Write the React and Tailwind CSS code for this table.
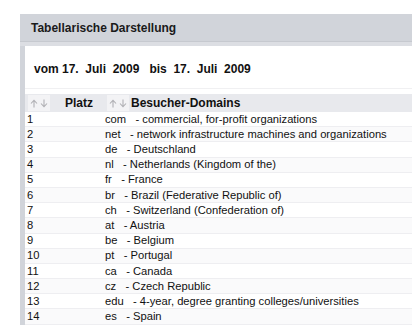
import React from "react";

const rows = [
  ["1", "com", "commercial, for-profit organizations"],
  ["2", "net", "network infrastructure machines and organizations"],
  ["3", "de", "Deutschland"],
  ["4", "nl", "Netherlands (Kingdom of the)"],
  ["5", "fr", "France"],
  ["6", "br", "Brazil (Federative Republic of)"],
  ["7", "ch", "Switzerland (Confederation of)"],
  ["8", "at", "Austria"],
  ["9", "be", "Belgium"],
  ["10", "pt", "Portugal"],
  ["11", "ca", "Canada"],
  ["12", "cz", "Czech Republic"],
  ["13", "edu", "4-year, degree granting colleges/universities"],
  ["14", "es", "Spain"],
];

function Arrows() {
  return (
    <span className="flex items-center gap-[2px] h-[16px] px-[2px] bg-[#f3f3f5]">
      <svg width="8" height="9" viewBox="0 0 8 9">
        <path d="M4 8.5V1.5M1 4.5L4 1.2L7 4.5" stroke="#b0b0b4" strokeWidth="1.1" fill="none" />
      </svg>
      <svg width="8" height="9" viewBox="0 0 8 9">
        <path d="M4 0.5V7.5M1 4.5L4 7.8L7 4.5" stroke="#b0b0b4" strokeWidth="1.1" fill="none" />
      </svg>
    </span>
  );
}

export default function App() {
  return (
    <div
      className="w-[412px] h-[325px] bg-white overflow-hidden pt-[14px] pl-[20px]"
      style={{ fontFamily: '"Liberation Sans", Arial, sans-serif' }}
    >
      <div className="h-full bg-[#d1d4da] flex flex-col">
        <div className="h-[28px] flex items-center pl-[11px] text-[12px] font-bold text-[#1a1a1a] border-b border-[#c6c9cf]">
          Tabellarische Darstellung
        </div>
        <div className="h-[4px] bg-[#dcdee3]" />
        <div className="flex-1 ml-[5px] bg-white flex flex-col">
          <div className="h-[43px] border-b border-[#f0f0f2] flex items-center pl-[9px] pt-[4px] text-[12px] font-bold text-[#111] whitespace-pre">
            {"vom 17.  Juli  2009   bis  17.  Juli  2009"}
          </div>
          <div className="h-[5px]" />
          <div className="flex h-[18px] bg-[#e8e9ed] text-[12px] font-bold text-[#111]">
            <div className="w-[80px] flex items-center pl-[3px]">
              <Arrows />
              <span className="ml-[15px]">Platz</span>
            </div>
            <div className="flex items-center pl-[2px]">
              <Arrows />
              <span className="ml-[2px]">Besucher-Domains</span>
            </div>
          </div>
          {rows.map(([n, code, desc], i) => (
            <div
              key={n}
              className={`flex h-[15.2px] items-center text-[11.2px] text-[#111] border-b border-[#eeeef1] ${i % 2 === 1 ? "bg-[#fafafb]" : "bg-white"}`}
            >
              <div className="w-[80px] pl-[2px]">{n}</div>
              <div className="whitespace-pre">{`${code}   - ${desc}`}</div>
            </div>
          ))}
        </div>
      </div>
    </div>
  );
}
